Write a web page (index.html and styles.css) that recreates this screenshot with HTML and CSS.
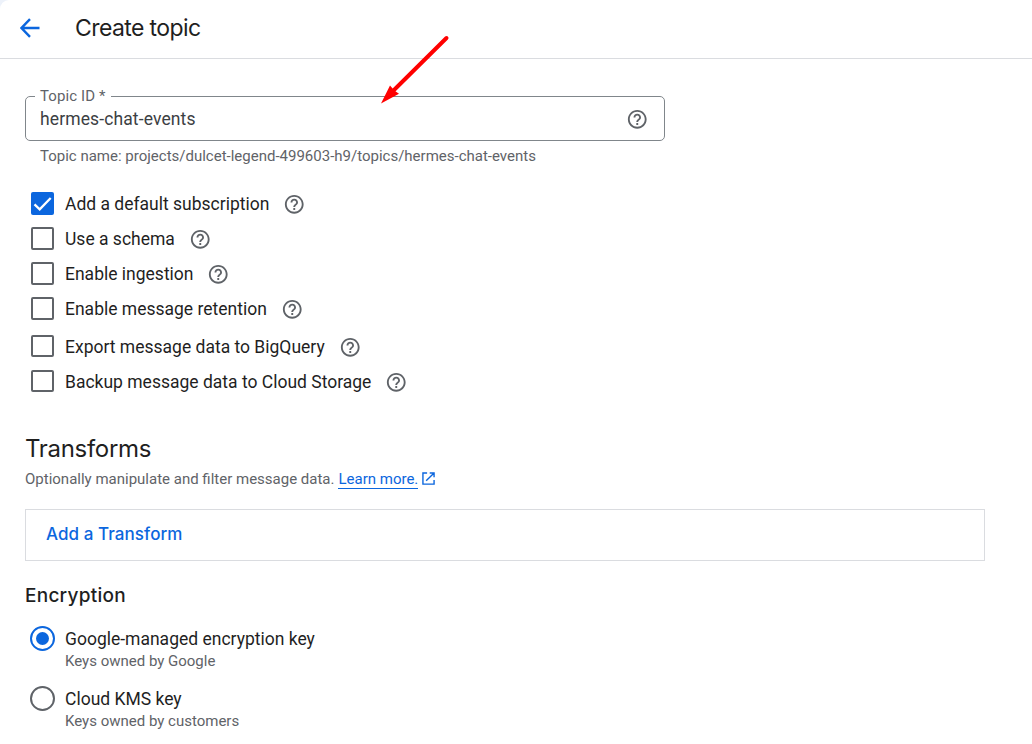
FILE: index.html
```html
<!DOCTYPE html>
<html lang="en">
<head>
<meta charset="utf-8">
<title>Create topic</title>
<link rel="stylesheet" href="styles.css">
</head>
<body>
<svg class="defs" width="0" height="0">
  <symbol id="help" viewBox="0 0 24 24"><path d="M11 18h2v-2h-2v2zm1-16C6.48 2 2 6.48 2 12s4.480 10 10 10 10-4.480 10-10S17.520 2 12 2zm0 18c-4.410 0-8-3.590-8-8s3.590-8 8-8 8 3.590 8 8-3.590 8-8 8zm0-14c-2.210 0-4 1.790-4 4h2c0-1.100.9-2 2-2s2 .9 2 2c0 2-3 1.750-3 5h2c0-2.250 3-2.500 3-5 0-2.210-1.790-4-4-4z"/></symbol>
</svg>
<div class="backdrop">
<div class="page">
  <header class="header">
    <svg class="back" viewBox="0 0 20 20"><path d="M19.500 10H2M10 1.200 1.500 10l8.500 8.800"/></svg>
    <h1 class="title">Create topic</h1>
  </header>
  <main class="content">
    <fieldset class="field">
      <legend class="field-label">Topic ID *</legend>
      <div class="field-body">
        <span class="field-value">hermes-chat-events</span>
        <svg class="help"><use href="#help"/></svg>
      </div>
    </fieldset>
    <p class="hint">Topic name: projects/dulcet-legend-499603-h9/topics/hermes-chat-events</p>
    <div class="options">
      <div class="option"><span class="box checked"><svg class="tick" viewBox="0 0 23 23"><path d="M3.500 12.300 8.700 17.300 19.700 6"/></svg></span><span class="label">Add a default subscription</span><svg class="help"><use href="#help"/></svg></div>
      <div class="option"><span class="box"></span><span class="label">Use a schema</span><svg class="help"><use href="#help"/></svg></div>
      <div class="option"><span class="box"></span><span class="label">Enable ingestion</span><svg class="help"><use href="#help"/></svg></div>
      <div class="option"><span class="box"></span><span class="label">Enable message retention</span><svg class="help"><use href="#help"/></svg></div>
      <div class="option export"><span class="box short"></span><span class="label">Export message data to BigQuery</span><svg class="help"><use href="#help"/></svg></div>
      <div class="option"><span class="box short"></span><span class="label">Backup message data to Cloud Storage</span><svg class="help"><use href="#help"/></svg></div>
    </div>
    <h2 class="section-title">Transforms</h2>
    <p class="description"><span>Optionally manipulate and filter message data.</span><a class="link">Learn more.</a><svg class="external" viewBox="0 0 14 14"><path d="M5.500 1H1v12h12V8.500M8.300 1H13v4.700M13 1 4.500 9.500"/></svg></p>
    <div class="transform-card"><span class="add">Add a Transform</span></div>
    <h3 class="subtitle">Encryption</h3>
    <div class="radio-row"><span class="radio selected"></span><div><div class="radio-label">Google-managed encryption key</div><div class="radio-note">Keys owned by Google</div></div></div>
    <div class="radio-row"><span class="radio"></span><div><div class="radio-label">Cloud KMS key</div><div class="radio-note">Keys owned by customers</div></div></div>
  </main>
  <svg class="pointer" viewBox="0 0 70 70"><path class="shaft" d="M66.500 4 14 56"/><path class="head" d="M1 69.500 10 51.500 13.500 55.500 15 57 19 59.800Z"/></svg>
</div>
</div>
</body>
</html>
```
FILE: styles.css
```css
* { box-sizing: border-box; }
body { margin: 0; font-family: Roboto, "Liberation Sans", sans-serif; color: #1f1f1f; }
h1, h2, h3, p { margin: 0; font-weight: 400; }
svg { flex: none; }
.defs { display: block; }
.backdrop { background: #edf2fa; }
.page { position: relative; height: 744px; overflow: hidden; background: #fff; border-top-left-radius: 9px; }
.header { display: flex; align-items: center; gap: 35px; height: 59px; padding: 0 0 2px 20px; border-bottom: 1px solid #dadce0; }
.back { width: 20px; height: 20px; fill: none; stroke: #0b66de; stroke-width: 2.4; }
.title, .section-title, .subtitle, .add { font-family: Inter, Roboto, sans-serif; }
.title { font-size: 23px; line-height: 30px; letter-spacing: -0.6px; }
.content { padding: 28px 47px 0 25px; }
.field { width: 640px; height: 54px; margin: 0; padding: 0 16px 0 9px; border: 1px solid #80868b; border-radius: 5px; }
.field-label { height: 19px; padding: 0 5px; font-size: 15px; line-height: 18px; letter-spacing: 0.1px; color: #5f6368; }
.field-body { display: flex; align-items: center; justify-content: space-between; height: 26px; padding-left: 5px; }
.field-value { font-size: 17.5px; line-height: 24px; letter-spacing: 0.12px; color: #3c4043; }
.help { width: 22.5px; height: 22.5px; fill: #5f6368; }
.hint { margin: 6px 0 0 15px; font-size: 15px; line-height: 18px; color: #5f6368; }
.options { margin-top: 21px; }
.option { display: flex; align-items: center; height: 35px; padding-left: 6px; }
.export { height: 38px; padding-top: 3px; }
.box { display: flex; width: 23px; height: 23px; margin-right: 11px; border: 2px solid #5f6368; border-radius: 2px; }
.short { height: 22px; margin-bottom: 1px; }
.checked { border: 0; background: #0b66de; }
.tick { width: 23px; height: 23px; fill: none; stroke: #fff; stroke-width: 2.3; }
.label { font-size: 17.5px; line-height: 24px; }
.label + .help { margin: 1px 0 0 13.9px; }
.section-title { margin-top: 33.5px; font-size: 24px; line-height: 32px; letter-spacing: -0.3px; }
.description { display: flex; align-items: center; height: 23px; margin-top: 2.5px; font-size: 15px; color: #5f6368; }
.link { height: 19px; margin: 1px 4px 0; line-height: 18px; border-bottom: 1px solid #0b66de; color: #0b66de; }
.external { width: 13px; height: 13px; margin-bottom: 1px; fill: none; stroke: #0b66de; stroke-width: 1.5; }
.transform-card { display: flex; align-items: center; height: 52px; margin-top: 18.5px; padding: 0 0 2px 20px; border: 1px solid #dadce0; }
.add { font-size: 17px; font-weight: 500; letter-spacing: 0.07px; color: #0b66de; }
.subtitle { margin: 22px 0 17px; font-size: 19px; line-height: 26px; letter-spacing: 0.25px; font-weight: 500; }
.radio-row { display: flex; gap: 10px; height: 60px; padding-left: 5px; }
.radio { flex: none; display: flex; align-items: center; justify-content: center; width: 25px; height: 25px; border: 2px solid #5f6368; border-radius: 50%; }
.selected { border-color: #0b66de; }
.selected::after { content: ""; width: 13px; height: 13px; border-radius: 50%; background: #0b66de; }
.radio-label { padding-top: 1px; font-size: 17.5px; line-height: 25px; }
.radio-note { font-size: 15px; line-height: 19px; color: #5f6368; }
.pointer { position: absolute; left: 380px; top: 34px; width: 70px; height: 70px; }
.shaft { fill: none; stroke: #f00; stroke-width: 4; stroke-linecap: round; }
.head { fill: #f00; }
```
